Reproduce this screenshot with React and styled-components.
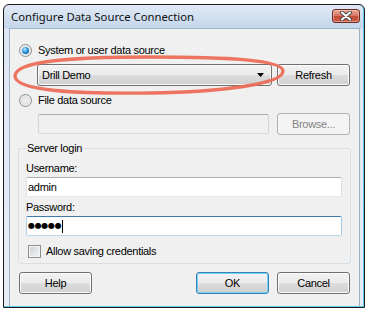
import React from 'react';
import styled, { createGlobalStyle, css } from 'styled-components';

const GlobalStyle = createGlobalStyle`
  html, body {
    margin: 0;
    padding: 0;
    background: #fff;
  }

  body {
    font-family: "Liberation Sans", Arial, sans-serif;
    font-size: 11px;
    color: #000;
  }
`;

const Page = styled.div`
  position: relative;
  width: 371px;
  height: 312px;
  overflow: hidden;
  box-sizing: border-box;
  padding: 4px 0 0 3px;
`;

const Window = styled.div`
  width: 362px;
  height: 304px;
  box-sizing: border-box;
  display: flex;
  flex-direction: column;
  border: 1px solid #1e1e1e;
  border-radius: 6px 6px 0 0;
  background: linear-gradient(#e1eaf5 0, #c3d6eb 23px, #dde7f3 24px, #e6edf6 100%);
  box-shadow: inset -1px 0 0 #5ec9ec, inset 0 -1px 0 #5ec9ec;
`;

const TitleBar = styled.div`
  height: 23px;
  flex: none;
  display: flex;
  justify-content: space-between;
  align-items: flex-start;
  padding: 0 4px 0 7px;
`;

const Title = styled.span`
  font-family: "Noto Sans", "Liberation Sans", sans-serif;
  font-size: 11.3px;
  line-height: 24px;
  color: #111;
`;

const CloseButton = styled.div`
  margin-top: 4px;
  width: 28px;
  height: 14px;
  box-sizing: border-box;
  border: 1px solid #6e2b22;
  border-radius: 3px;
  background: linear-gradient(#eaa898 0%, #d67a66 45%, #c24a33 55%, #d0604a 100%);
  box-shadow: inset 0 0 0 1px rgba(255, 220, 210, 0.45);
  display: flex;
  align-items: center;
  justify-content: center;
`;

const Client = styled.div`
  flex: 1;
  margin: 0 4px 1px 5px;
  border: 1px solid #9fb1c7;
  border-bottom: none;
  background: #f0f0f0;
  padding-top: 15px;
  display: flex;
  flex-direction: column;
`;

const RadioRow = styled.div`
  display: flex;
  align-items: center;
  height: 13px;
  margin: ${(p) => p.$top}px 0 0 9px;
`;

const Radio = styled.div`
  width: 13px;
  height: 13px;
  box-sizing: border-box;
  border-radius: 50%;
  border: 1px solid #8a8c8e;
  background: radial-gradient(circle at 50% 50%, #f2f2f2 0, #e2e3e4 45%, #fdfdfd 100%);
  display: flex;
  align-items: center;
  justify-content: center;
`;

const RadioDot = styled.div`
  width: 7px;
  height: 7px;
  border-radius: 50%;
  background: radial-gradient(circle at 40% 35%, #c6f0ff 0%, #45ace6 35%, #0d63ad 75%, #07427e 100%);
`;

const OptionLabel = styled.span`
  margin-left: ${(p) => p.$gap || 6}px;
  line-height: 13px;
  letter-spacing: -0.3px;
  white-space: nowrap;
`;

const SourceRow = styled.div`
  display: flex;
  align-items: flex-start;
  justify-content: space-between;
  margin-top: ${(p) => p.$top}px;
  padding: 0 9px 0 ${(p) => p.$indent}px;
`;

const Combo = styled.div`
  width: 235px;
  height: 22px;
  box-sizing: border-box;
  border: 1px solid #707070;
  border-radius: 3px;
  background: linear-gradient(#f2f2f2 0%, #ebebeb 50%, #dddddd 50%, #cfcfcf 100%);
  box-shadow: inset 0 0 0 1px #fbfbfb;
  display: flex;
  align-items: center;
  justify-content: space-between;
  padding: 0 7px 0 4px;
  letter-spacing: -0.3px;
`;

const TextBox = styled.div`
  width: ${(p) => p.$width}px;
  height: 20px;
  box-sizing: border-box;
  margin-top: ${(p) => p.$top || 0}px;
  border: 1px solid;
  border-color: ${(p) =>
    p.$focused ? '#3d7bad #a4c9e3 #b7d9ed #b5cfe7' : p.$disabled ? '#afafaf #d4d4d4 #dadada #d4d4d4' : '#abadb3 #dbdfe6 #e3e9ef #e2e3ea'};
  border-radius: 2px;
  background: ${(p) => (p.$disabled ? '#f0f0f0' : '#fff')};
  padding-left: 1px;
  line-height: 18px;
  display: flex;
  align-items: center;
  letter-spacing: -0.3px;
`;

const Button = styled.div`
  width: 73px;
  height: 22px;
  box-sizing: border-box;
  border: 1px solid #707070;
  border-radius: 3px;
  background: linear-gradient(#f2f2f2 0%, #ebebeb 50%, #dddddd 50%, #cfcfcf 100%);
  box-shadow: inset 0 0 0 1px #fcfcfc;
  display: flex;
  align-items: center;
  justify-content: center;
  letter-spacing: -0.3px;
  margin-left: ${(p) => p.$left || 0}px;

  ${(p) =>
    p.$focused &&
    css`
      border-color: #3c7fb1;
      box-shadow: inset 0 0 0 1px #6ed3f6;
    `}

  ${(p) =>
    p.$disabled &&
    css`
      border-color: #adb2b5;
      background: #f4f4f4;
      box-shadow: none;
      color: #838383;
    `}
`;

const GroupBox = styled.fieldset`
  margin: 7px 8px 0 8px;
  padding: 0 7px 5px 7px;
  min-width: 0;
  border: 1px solid #d5dfe5;
  border-radius: 3px;
`;

const Legend = styled.legend`
  margin-left: 0;
  padding: 0 1px;
  line-height: 13px;
  letter-spacing: -0.3px;
`;

const FieldLabel = styled.div`
  margin-top: ${(p) => p.$top}px;
  line-height: 13px;
  letter-spacing: -0.3px;
`;

const Dots = styled.span`
  font-family: "DejaVu Sans", sans-serif;
  font-size: 8px;
  letter-spacing: -0.3px;
`;

const Caret = styled.span`
  width: 1px;
  height: 13px;
  background: #000;
  margin-left: 1px;
`;

const CheckRow = styled.div`
  display: flex;
  align-items: center;
  height: 13px;
  margin: 9px 0 0 2px;
`;

const CheckBox = styled.div`
  width: 13px;
  height: 13px;
  box-sizing: border-box;
  border: 1px solid #8e8f8f;
  background: linear-gradient(135deg, #cbcfd5, #f7f7f7);
  box-shadow: inset 0 0 0 1px #f4f4f4;
`;

const ButtonRow = styled.div`
  display: flex;
  margin-top: 8px;
  padding: 0 9px;
`;

const Spacer = styled.div`
  flex: 1;
`;

const Annotation = styled.svg`
  position: absolute;
  left: 0;
  top: 0;
  pointer-events: none;
`;

const App = () => (
  <>
    <GlobalStyle />
    <Page>
      <Window>
        <TitleBar>
          <Title>Configure Data Source Connection</Title>
          <CloseButton>
            <svg width="14" height="10" viewBox="0 0 14 10">
              <path d="M3 1.5 L11 8.5 M11 1.5 L3 8.5" stroke="#4a4a4a" strokeWidth="4" strokeLinecap="round" />
              <path d="M3 1.5 L11 8.5 M11 1.5 L3 8.5" stroke="#fff" strokeWidth="2" strokeLinecap="round" />
            </svg>
          </CloseButton>
        </TitleBar>
        <Client>
          <RadioRow $top={0}>
            <Radio>
              <RadioDot />
            </Radio>
            <OptionLabel>System or user data source</OptionLabel>
          </RadioRow>
          <SourceRow $top={7} $indent={27}>
            <Combo>
              <span>Drill Demo</span>
              <svg width="7" height="4" viewBox="0 0 7 4">
                <path d="M0 0 H7 L3.5 4 Z" fill="#000" />
              </svg>
            </Combo>
            <Button>Refresh</Button>
          </SourceRow>
          <RadioRow $top={8}>
            <Radio />
            <OptionLabel>File data source</OptionLabel>
          </RadioRow>
          <SourceRow $top={6} $indent={28}>
            <TextBox $width={231} $top={1} $disabled />
            <Button $disabled>Browse...</Button>
          </SourceRow>
          <GroupBox>
            <Legend>Server login</Legend>
            <FieldLabel $top={7}>Username:</FieldLabel>
            <TextBox $width={316} $top={2}>admin</TextBox>
            <FieldLabel $top={4}>Password:</FieldLabel>
            <TextBox $width={316} $top={2} $focused>
              <Dots>●●●●●</Dots>
              <Caret />
            </TextBox>
            <CheckRow>
              <CheckBox />
              <OptionLabel $gap={5}>Allow saving credentials</OptionLabel>
            </CheckRow>
          </GroupBox>
          <ButtonRow>
            <Button>Help</Button>
            <Spacer />
            <Button $focused>OK</Button>
            <Button $left={8}>Cancel</Button>
          </ButtonRow>
        </Client>
      </Window>
      <Annotation width="371" height="312" viewBox="0 0 371 312">
        <path
          d="M15 76 C15 61 70 57 150 57 C228 57 283 60 283 71 C283 84 222 92 150 93 C78 94 15 91 15 76 Z"
          fill="none"
          stroke="#ec6954"
          strokeWidth="3.4"
          opacity="0.92"
        />
      </Annotation>
    </Page>
  </>
);

export default App;
